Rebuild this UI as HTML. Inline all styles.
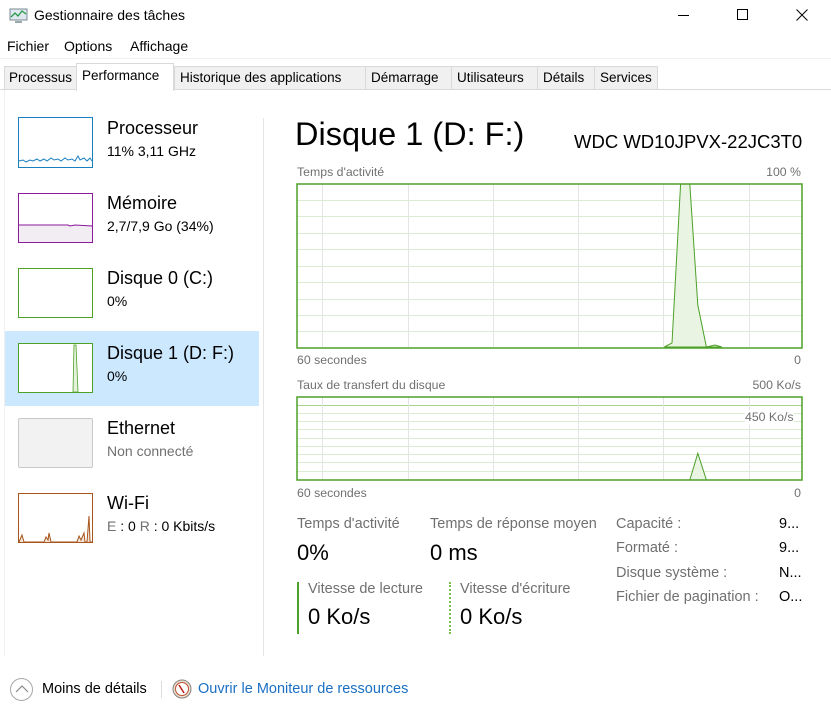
<!DOCTYPE html>
<html><head><meta charset="utf-8"><style>
*{margin:0;padding:0;box-sizing:border-box}
body{width:831px;height:719px;background:#fff;font-family:"Liberation Sans",sans-serif;color:#000;position:relative;overflow:hidden}
.a{position:absolute;white-space:nowrap}
.tab{position:absolute;top:66px;height:24px;background:#f0f0f0;border:1px solid #d9d9d9;font-size:13.5px;line-height:22px;padding-left:5px;color:#000}
.g{color:#707070}
.st{font-size:18px}
.sb{font-size:14px}
.lbl{font-size:12.3px;color:#707070}
</style></head><body>
<svg class="a" style="left:9px;top:7px" width="20" height="18" viewBox="0 0 20 18"><rect x="1" y="2" width="17" height="11" fill="#dfe8ee" stroke="#7a8a96"/><polyline points="2,10 6,6 9,9 13,4 17,7" fill="none" stroke="#2a9a4a" stroke-width="1.3"/><rect x="6" y="14" width="7" height="2" fill="#9aa"/></svg>
<div class="a" style="left:34px;top:7px;font-size:14px">Gestionnaire des tâches</div>
<div class="a" style="left:678px;top:15px;width:11px;height:1px;background:#000"></div>
<div class="a" style="left:737px;top:9px;width:11px;height:11px;border:1px solid #000"></div>
<svg class="a" style="left:796px;top:9px" width="12" height="12"><path d="M0.5 0.5L11.5 11.5M11.5 0.5L0.5 11.5" stroke="#000" stroke-width="1"/></svg>
<div class="a" style="left:7px;top:38px;font-size:14px">Fichier</div>
<div class="a" style="left:64px;top:38px;font-size:14px">Options</div>
<div class="a" style="left:130px;top:38px;font-size:14px">Affichage</div>
<div class="a" style="left:0;top:58px;width:831px;height:1px;background:#f0f0f0"></div>
<div class="a" style="left:0;top:89px;width:831px;height:1px;background:#d9d9d9"></div>
<div class="tab" style="left:4px;width:73px;padding-left:4px">Processus</div>
<div class="tab" style="left:174px;width:192px">Historique des applications</div>
<div class="tab" style="left:365px;width:87px">Démarrage</div>
<div class="tab" style="left:451px;width:87px">Utilisateurs</div>
<div class="tab" style="left:537px;width:58px">Détails</div>
<div class="tab" style="left:594px;width:64px">Services</div>
<div class="tab" style="left:76px;width:98px;top:63px;height:28px;background:#fff;border-bottom:none;line-height:24px">Performance</div>
<div class="a" style="left:4px;top:90px;width:1px;height:566px;background:#f0f0f0"></div>
<div class="a" style="left:263px;top:118px;width:1px;height:538px;background:#e5e5e5"></div>
<svg class="a" style="left:18px;top:117px" width="75" height="51"><rect x="0.5" y="0.5" width="74" height="50" fill="#fff" stroke="#1a7fbf"/><polyline points="1,44 5,43 8,45 12,43 15,44 19,42 22,44 26,42 29,44 33,41 36,43 40,42 43,44 47,41 50,43 54,42 57,44 60,39 62,43 66,41 69,44 72,41 74,44" fill="none" stroke="#1a7fbf" stroke-width="1"/></svg>
<div class="a st" style="left:107px;top:118px">Processeur</div>
<div class="a sb" style="left:107px;top:143px">11% 3,11 GHz</div>
<svg class="a" style="left:18px;top:193px" width="75" height="50"><rect x="0.5" y="0.5" width="74" height="49" fill="#fff" stroke="#8b1a9b"/><rect x="1" y="32" width="73" height="17" fill="#f1edf2"/><polyline points="1,32 50,32 52,33 57,32 74,33" fill="none" stroke="#8b1a9b"/></svg>
<div class="a st" style="left:107px;top:193px">Mémoire</div>
<div class="a sb" style="left:107px;top:218px">2,7/7,9 Go (34%)</div>
<svg class="a" style="left:18px;top:268px" width="75" height="50"><rect x="0.5" y="0.5" width="74" height="49" fill="#fff" stroke="#4da028"/></svg>
<div class="a st" style="left:107px;top:268px">Disque 0 (C:)</div>
<div class="a sb" style="left:107px;top:293px">0%</div>
<div class="a" style="left:5px;top:331px;width:254px;height:75px;background:#cce8ff"></div>
<svg class="a" style="left:18px;top:343px" width="75" height="50"><rect x="0.5" y="0.5" width="74" height="49" fill="#fff" stroke="#4da028"/><polygon points="55,49 56,2 58,2 60,49" fill="#e5f3dd" stroke="#4da028" stroke-width="0.8"/></svg>
<div class="a st" style="left:107px;top:343px">Disque 1 (D: F:)</div>
<div class="a sb" style="left:107px;top:368px">0%</div>
<div class="a" style="left:18px;top:418px;width:75px;height:50px;background:#f2f2f2;border:1px solid #c8c8c8;border-radius:2px"></div>
<div class="a st" style="left:107px;top:418px">Ethernet</div>
<div class="a sb g" style="left:107px;top:443px">Non connecté</div>
<svg class="a" style="left:18px;top:493px" width="75" height="50"><rect x="0.5" y="0.5" width="74" height="49" fill="#fff" stroke="#a8541a"/><polyline points="1,49 4,42 6,49 26,49 28,44 30,47 31,40 33,49 59,49 61,43 63,47 66,40 67,49 69,49 71,23 72,49 74,49" fill="#f2e6dc" stroke="#a8541a" stroke-width="1"/></svg>
<div class="a st" style="left:107px;top:493px">Wi-Fi</div>
<div class="a sb" style="left:107px;top:518px"><span class="g">E</span> : 0 <span class="g">R</span> : 0 Kbits/s</div>
<div class="a" style="left:295px;top:116px;font-size:32.5px">Disque 1 (D: F:)</div>
<div class="a" style="left:574px;top:131px;font-size:18.5px">WDC WD10JPVX-22JC3T0</div>
<div class="a lbl" style="left:297px;top:165px">Temps d'activité</div>
<div class="a lbl" style="right:30px;top:165px">100 %</div>
<svg class="a" style="left:296px;top:183px" width="507" height="166">
<g stroke="#dcecd2" stroke-width="1">
<line x1="1" y1="17.5" x2="506" y2="17.5"/><line x1="1" y1="33.5" x2="506" y2="33.5"/><line x1="1" y1="50.5" x2="506" y2="50.5"/><line x1="1" y1="66.5" x2="506" y2="66.5"/><line x1="1" y1="83.5" x2="506" y2="83.5"/><line x1="1" y1="99.5" x2="506" y2="99.5"/><line x1="1" y1="116.5" x2="506" y2="116.5"/><line x1="1" y1="132.5" x2="506" y2="132.5"/><line x1="1" y1="148.5" x2="506" y2="148.5"/>
</g>
<g stroke="#e4e4e4"><line x1="26.5" y1="1" x2="26.5" y2="164"/><line x1="112.5" y1="1" x2="112.5" y2="164"/><line x1="197.5" y1="1" x2="197.5" y2="164"/><line x1="282.5" y1="1" x2="282.5" y2="164"/><line x1="367.5" y1="1" x2="367.5" y2="164"/><line x1="453.5" y1="1" x2="453.5" y2="164"/></g>
<polygon points="368.4,164 376,160 384.6,1 393.8,1 401.8,122 410.4,164 419,162 425.8,164" fill="#e9f4e2" stroke="#4da028" stroke-width="1"/>
<rect x="1" y="1" width="505" height="164" fill="none" stroke="#4da028" stroke-width="1.5"/>
</svg>
<div class="a lbl" style="left:297px;top:353px">60 secondes</div>
<div class="a lbl" style="right:30px;top:353px">0</div>
<div class="a lbl" style="left:297px;top:378px">Taux de transfert du disque</div>
<div class="a lbl" style="right:30px;top:378px">500 Ko/s</div>
<svg class="a" style="left:296px;top:396px" width="507" height="86">
<g stroke="#dcecd2" stroke-width="1">
<line x1="1" y1="9.5" x2="506" y2="9.5" stroke="#a8d290"/><line x1="1" y1="17.5" x2="506" y2="17.5"/><line x1="1" y1="25.5" x2="506" y2="25.5"/><line x1="1" y1="33.5" x2="506" y2="33.5"/><line x1="1" y1="42.5" x2="506" y2="42.5"/><line x1="1" y1="50.5" x2="506" y2="50.5"/><line x1="1" y1="58.5" x2="506" y2="58.5"/><line x1="1" y1="66.5" x2="506" y2="66.5"/><line x1="1" y1="75.5" x2="506" y2="75.5"/>
</g>
<g stroke="#e4e4e4"><line x1="26.5" y1="1" x2="26.5" y2="84"/><line x1="112.5" y1="1" x2="112.5" y2="84"/><line x1="197.5" y1="1" x2="197.5" y2="84"/><line x1="282.5" y1="1" x2="282.5" y2="84"/><line x1="367.5" y1="1" x2="367.5" y2="84"/><line x1="453.5" y1="1" x2="453.5" y2="84"/></g>
<polygon points="393.8,84 401.8,57.3 410.4,84" fill="#e9f4e2" stroke="#4da028" stroke-width="1"/>
<rect x="1" y="1" width="505" height="83" fill="none" stroke="#4da028" stroke-width="1.5"/>
</svg>
<div class="a lbl" style="left:745px;top:410px;background:#fff">450 Ko/s</div>
<div class="a lbl" style="left:297px;top:486px">60 secondes</div>
<div class="a lbl" style="right:30px;top:486px">0</div>
<div class="a g" style="left:297px;top:516px;font-size:14.5px">Temps d'activité</div>
<div class="a" style="left:297px;top:540px;font-size:22px">0%</div>
<div class="a g" style="left:430px;top:516px;font-size:14.5px">Temps de réponse moyen</div>
<div class="a" style="left:430px;top:540px;font-size:22px">0 ms</div>
<div class="a" style="left:297px;top:582px;width:2px;height:52px;background:#4da028"></div>
<div class="a g" style="left:308px;top:581px;font-size:14.5px">Vitesse de lecture</div>
<div class="a" style="left:308px;top:604px;font-size:22px">0 Ko/s</div>
<div class="a" style="left:449px;top:582px;width:0;height:52px;border-left:2px dotted #7cc04a"></div>
<div class="a g" style="left:460px;top:581px;font-size:14.5px">Vitesse d'écriture</div>
<div class="a" style="left:460px;top:604px;font-size:22px">0 Ko/s</div>
<div class="a g" style="left:616px;top:512px;font-size:14.5px;line-height:24.3px">Capacité :<br>Formaté :<br>Disque système :<br>Fichier de pagination :</div>
<div class="a" style="left:779px;top:512px;font-size:14.5px;line-height:24.3px">9...<br>9...<br>N...<br>O...</div>
<div class="a" style="left:10px;top:678px;width:23px;height:23px;border:1px solid #a8a8a8;border-radius:50%"></div>
<svg class="a" style="left:15px;top:684px" width="14" height="10"><polyline points="1,8 7,2 13,8" fill="none" stroke="#888" stroke-width="1.2"/></svg>
<div class="a" style="left:42px;top:681px;font-size:14.5px">Moins de détails</div>
<div class="a" style="left:161px;top:681px;width:1px;height:17px;background:#ddd"></div>
<svg class="a" style="left:172px;top:679px" width="20" height="20"><circle cx="10" cy="10" r="9" fill="#e6e0d8" stroke="#8a8078"/><circle cx="10" cy="10" r="6.5" fill="#fff" stroke="#c0502a"/><line x1="7" y1="6" x2="12" y2="14" stroke="#c0201a" stroke-width="1.5"/></svg>
<div class="a" style="left:198px;top:681px;font-size:14.5px;color:#1a6fc4">Ouvrir le Moniteur de ressources</div>
</body></html>
